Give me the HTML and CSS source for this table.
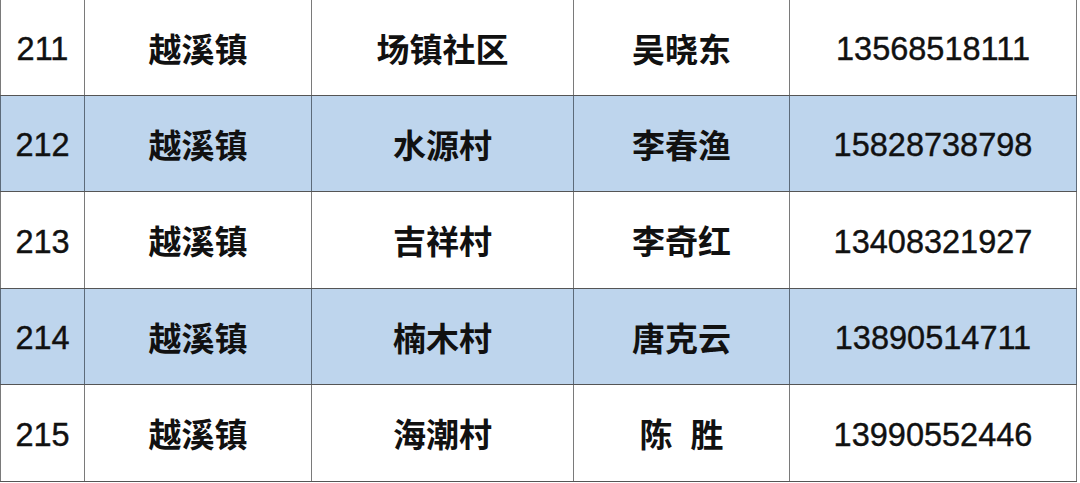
FILE: index.html
```html
<!DOCTYPE html>
<html>
<head>
<meta charset="utf-8">
<link rel="stylesheet" href="styles.css">
</head>
<body>
<table class="roster">
  <colgroup>
    <col class="c1"><col class="c2"><col class="c3"><col class="c4"><col class="c5">
  </colgroup>
  <tbody>
    <tr class="r-first">
      <td class="num">211</td><td class="zh">越溪镇</td><td class="zh">场镇社区</td><td class="zh">吴晓东</td><td class="num">13568518111</td>
    </tr>
    <tr class="blue">
      <td class="num">212</td><td class="zh">越溪镇</td><td class="zh">水源村</td><td class="zh">李春渔</td><td class="num">15828738798</td>
    </tr>
    <tr class="tall">
      <td class="num">213</td><td class="zh">越溪镇</td><td class="zh">吉祥村</td><td class="zh">李奇红</td><td class="num">13408321927</td>
    </tr>
    <tr class="blue">
      <td class="num">214</td><td class="zh">越溪镇</td><td class="zh">楠木村</td><td class="zh">唐克云</td><td class="num">13890514711</td>
    </tr>
    <tr class="tall">
      <td class="num">215</td><td class="zh">越溪镇</td><td class="zh">海潮村</td><td class="zh">陈<span class="gap"></span>胜</td><td class="num">13990552446</td>
    </tr>
  </tbody>
</table>
</body>
</html>
```

FILE: styles.css
```css
html, body {
  margin: 0;
  padding: 0;
  background: #ffffff;
}
.roster {
  border-collapse: collapse;
  table-layout: fixed;
  width: 1076px;
  font-family: "Liberation Sans", "Noto Sans CJK SC", sans-serif;
  color: #111;
}
.c1 { width: 84px; }
.c2 { width: 227px; }
.c3 { width: 262px; }
.c4 { width: 216px; }
.c5 { width: 287px; }
.roster td {
  height: 95px;
  padding: 0;
  text-align: center;
  vertical-align: middle;
  border-left: 1px solid #7a7a7a;
  border-right: 1px solid #7a7a7a;
  border-bottom: 1px solid #555;
}
.roster tr.tall td { height: 96px; }
.roster tr.blue td {
  background: #bed5ed;
  border-left-color: #5d6b7a;
  border-right-color: #5d6b7a;
}
.roster td.num {
  font-size: 32.5px;
  font-weight: 400;
  padding-top: 4px;
  height: 91px;
  -webkit-text-stroke: 0.4px #111;
}
.roster tr.tall td.num { height: 92px; }
.roster td.zh {
  font-family: "Noto Sans CJK SC", sans-serif;
  font-size: 33px;
  font-weight: 700;
}
.gap {
  display: inline-block;
  width: 18px;
}
```
